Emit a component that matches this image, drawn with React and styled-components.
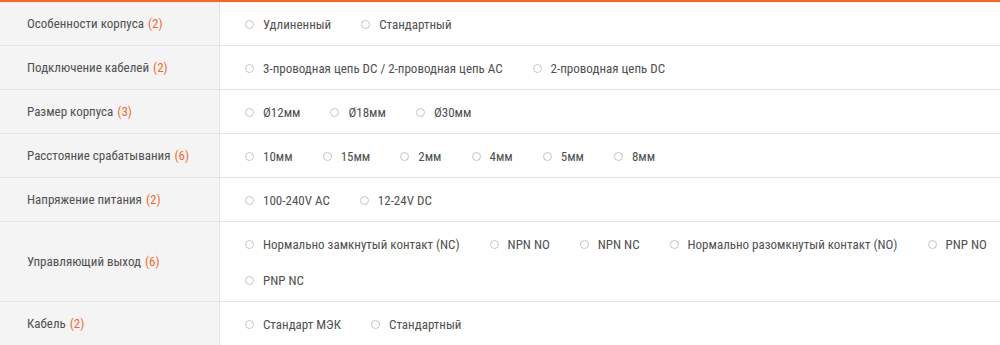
import React from "react";
import styled, { createGlobalStyle } from "styled-components";

const Global = createGlobalStyle`
  html, body { margin: 0; padding: 0; background: #fff; }
  body { font-family: Roboto, "Liberation Sans", sans-serif; }
`;

const Table = styled.div`
  width: 1000px;
  border-top: 2px solid #fb6620;
  font-family: Roboto, "Liberation Sans", sans-serif;
  font-stretch: 84%;
  font-weight: 450;
  font-size: 13px;
  color: #505050;
`;

const Row = styled.div`
  display: grid;
  grid-template-columns: 220px 1fr;
  border-bottom: 1px solid #e3e3e3;
`;

const Label = styled.div`
  background: #f4f4f4;
  border-right: 1px solid #e3e3e3;
  display: flex;
  align-items: center;
  padding-left: 27px;
`;

const Count = styled.span`
  color: #f7672a;
  margin-left: 4px;
`;

const Options = styled.div`
  display: flex;
  flex-wrap: wrap;
  column-gap: 30px;
  padding: 4px 0 3px 25px;
`;

const Option = styled.label`
  display: flex;
  align-items: center;
  height: 36px;
  cursor: pointer;
  white-space: nowrap;
`;

const Radio = styled.span`
  width: 7px;
  height: 7px;
  border: 1px solid #c4c4c4;
  border-radius: 50%;
  margin-right: 9px;
  flex: none;
`;

const data = [
  ["Особенности корпуса", ["Удлиненный", "Стандартный"]],
  ["Подключение кабелей", ["3-проводная цепь DC / 2-проводная цепь AC", "2-проводная цепь DC"]],
  ["Размер корпуса", ["Ø12мм", "Ø18мм", "Ø30мм"]],
  ["Расстояние срабатывания", ["10мм", "15мм", "2мм", "4мм", "5мм", "8мм"]],
  ["Напряжение питания", ["100-240V AC", "12-24V DC"]],
  ["Управляющий выход", ["Нормально замкнутый контакт (NC)", "NPN NO", "NPN NC", "Нормально разомкнутый контакт (NO)", "PNP NO", "PNP NC"]],
  ["Кабель", ["Стандарт МЭК", "Стандартный"]],
];

export default function App() {
  return (
    <>
      <Global />
      <Table>
        {data.map(([label, opts]) => (
          <Row key={label}>
            <Label>
              {label}
              <Count>({opts.length})</Count>
            </Label>
            <Options>
              {opts.map((o) => (
                <Option key={o}>
                  <Radio />
                  {o}
                </Option>
              ))}
            </Options>
          </Row>
        ))}
      </Table>
    </>
  );
}
